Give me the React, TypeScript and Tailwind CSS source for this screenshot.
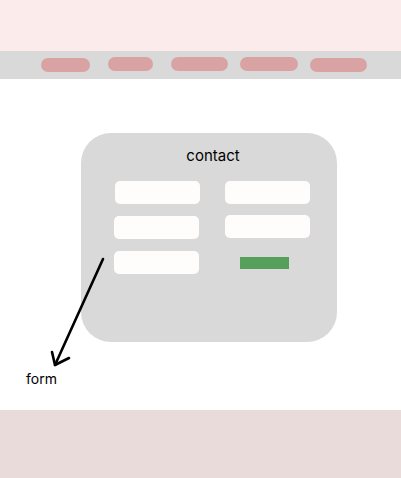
import React from 'react';

const pills = [
  { w: 'w-[49px]', ml: 'ml-[41px]', mt: 'mt-[7px]' },
  { w: 'w-[45px]', ml: 'ml-[18px]', mt: 'mt-[6px]' },
  { w: 'w-[57px]', ml: 'ml-[18px]', mt: 'mt-[6px]' },
  { w: 'w-[58px]', ml: 'ml-[12px]', mt: 'mt-[6px]' },
  { w: 'w-[57px]', ml: 'ml-[12px]', mt: 'mt-[7px]' },
];

const Field: React.FC<{ className?: string }> = ({ className = '' }) => (
  <div className={`h-[23px] w-[85px] rounded-[5px] bg-[#fffcfc] ${className}`} />
);

export default function App() {
  return (
    <div className="w-[401px] h-[478px] flex flex-col bg-white font-['Inter',sans-serif] text-black overflow-hidden">
      {/* Header */}
      <div className="h-[51px] bg-[#fcebeb]" />

      {/* Nav */}
      <div className="h-[28px] bg-[#d9d9d9] flex items-start">
        {pills.map((p, i) => (
          <div key={i} className={`h-[14px] rounded-full bg-[#d9a3a3] ${p.w} ${p.ml} ${p.mt}`} />
        ))}
      </div>

      {/* Main */}
      <div className="relative h-[331px]">
        <div className="ml-[81px] mt-[54px] w-[256px] h-[209px] rounded-[30px] bg-[#d9d9d9] flex flex-col">
          <p className="mt-[13px] text-center text-[15px] leading-[20px] pl-[8px]">contact</p>
          <div className="mt-[15px] flex">
            <div className="ml-[33px] flex flex-col gap-[12px]">
              <Field className="ml-[1px]" />
              <Field />
              <Field />
            </div>
            <div className="ml-[25px] flex flex-col">
              <Field />
              <Field className="mt-[11px]" />
              <div className="mt-[19px] ml-[15px] h-[12px] w-[49px] bg-[#57a05b]" />
            </div>
          </div>
        </div>

        {/* annotation arrow */}
        <svg className="absolute left-0 top-0" width="140" height="300" viewBox="0 0 140 300" fill="none">
          <path d="M103 180 L55 286" stroke="#000" strokeWidth="2.6" strokeLinecap="round" />
          <path d="M52 273 L55 286 L69 279" stroke="#000" strokeWidth="2.6" strokeLinecap="round" strokeLinejoin="round" />
        </svg>
        <span className="absolute left-[26px] top-[290px] text-[14px] leading-[20px]">form</span>
      </div>

      {/* Footer */}
      <div className="h-[68px] bg-[#eadbdb]" />
    </div>
  );
}
